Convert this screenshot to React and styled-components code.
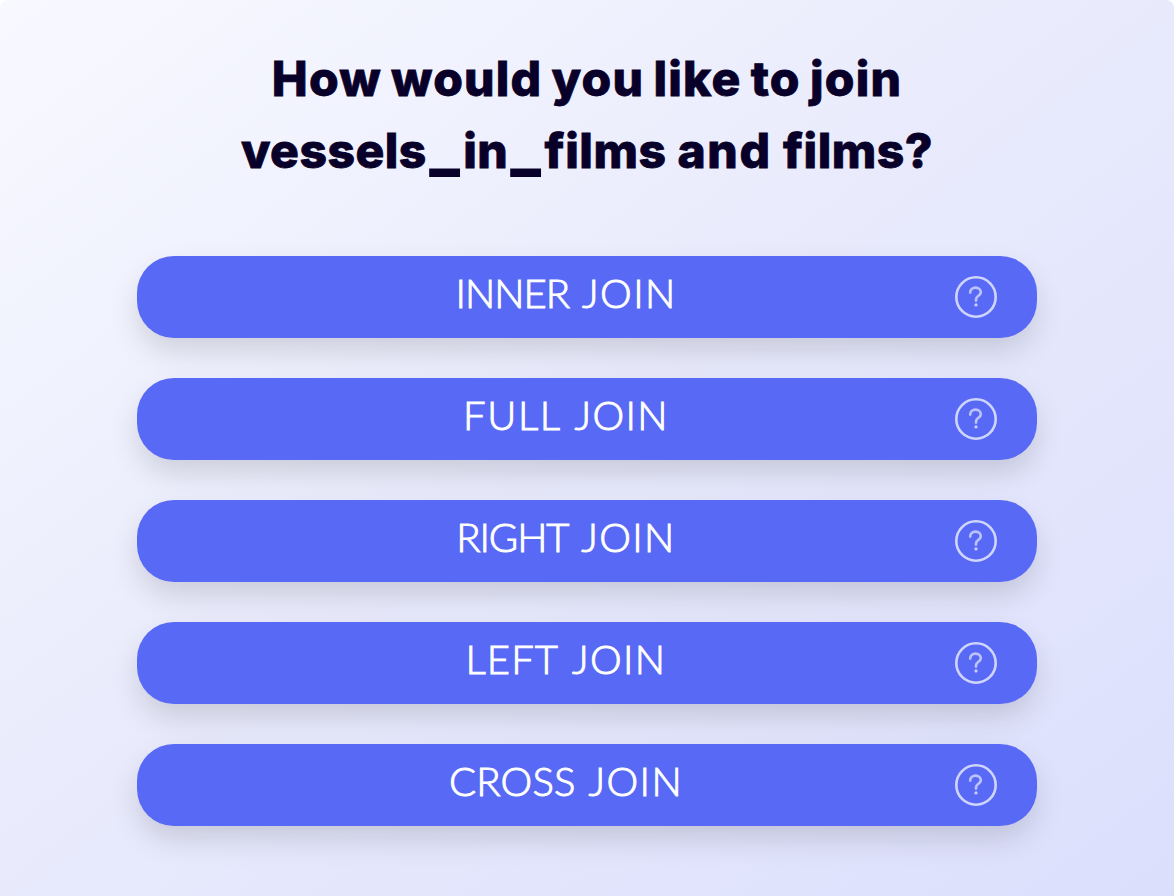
import React from "react";
import styled, { createGlobalStyle } from "styled-components";

const GlobalStyle = createGlobalStyle`
  *, *::before, *::after { box-sizing: border-box; }
  body { margin: 0; background: #fff; }
`;

const Panel = styled.main`
  width: 1174px;
  height: 896px;
  padding-top: 43px;
  display: flex;
  flex-direction: column;
  align-items: center;
  overflow: hidden;
  border-radius: 8px 8px 0 0;
  background: linear-gradient(to bottom right, #f8f9ff 0%, #e8eafc 50%, #dbdffc 100%);
`;

const Title = styled.h1`
  margin: 0 0 69px;
  display: flex;
  flex-direction: column;
  align-items: center;
  color: #080029;
  font: 800 48px/72px Inter, "Open Sans", sans-serif;
  -webkit-text-stroke: 0.8px #080029;
`;

const TitleLine = styled.span`
  display: block;
  white-space: nowrap;
  letter-spacing: ${(p) => p.$spacing}px;
  word-spacing: ${(p) => p.$words}px;
`;

const Word = styled.span`
  letter-spacing: ${(p) => p.$spacing}px;
`;

const Underscore = styled.span`
  display: inline-block;
  margin: 0 7px 0 6px;
  letter-spacing: 0;
  transform: translateY(-3px) scale(1.28, 1.25);
`;

const Options = styled.div`
  width: 900px;
  display: flex;
  flex-direction: column;
  gap: 40px;
`;

const OptionButton = styled.button`
  height: 82px;
  width: 100%;
  padding: 0 40px 0 0;
  border: 0;
  border-radius: 37px;
  display: flex;
  align-items: center;
  background: #5869f6;
  color: #fff;
  box-shadow: 0 14px 30px -2px rgba(0, 0, 0, 0.145);
`;

const Label = styled.span`
  flex: 1;
  padding: 0 0 8px 40px;
  text-align: center;
  white-space: nowrap;
  font: 300 40px/60px Lato, sans-serif;
  word-spacing: 2px;
  -webkit-text-stroke: 1px #fff;
`;

const HelpIcon = styled.svg`
  width: 42px;
  height: 42px;
  flex: none;
  fill: none;
  stroke: #fff;
  stroke-linecap: round;
  stroke-linejoin: round;
`;

const options = [
  { name: "INNER", spacing: -0.9 },
  { name: "FULL", spacing: 1.6 },
  { name: "RIGHT", spacing: -1.1 },
  { name: "LEFT", spacing: 1.1 },
  { name: "CROSS", spacing: 0.2 },
];

function Help() {
  return (
    <HelpIcon viewBox="0 0 42 42" aria-hidden="true">
      <circle cx="21" cy="21" r="19.7" strokeWidth="2.6" opacity="0.72" />
      <path
        d="M15.2 16.6C15.2 13.4 17.5 11.7 20.5 11.7C23.6 11.7 25.8 13.5 25.8 16.2C25.8 19.7 21 19.9 21 23.4V24.6"
        strokeWidth="2.7"
        opacity="0.6"
      />
      <path d="M21 28.8V29" strokeWidth="3.2" opacity="0.68" />
    </HelpIcon>
  );
}

export default function App() {
  return (
    <>
      <GlobalStyle />
      <Panel>
        <Title>
          <TitleLine $spacing={1.2} $words={-2.5}>
            How would you like to join
          </TitleLine>
          <TitleLine $spacing={0.5} $words={0}>
            vessels<Underscore>_</Underscore>in<Underscore>_</Underscore>films{" "}
            <Word $spacing={1.7}>and</Word> films?
          </TitleLine>
        </Title>
        <Options>
          {options.map((o) => (
            <OptionButton key={o.name} type="button">
              <Label>
                <Word $spacing={o.spacing}>{o.name}</Word> <Word $spacing={1.4}>JOIN</Word>
              </Label>
              <Help />
            </OptionButton>
          ))}
        </Options>
      </Panel>
    </>
  );
}
